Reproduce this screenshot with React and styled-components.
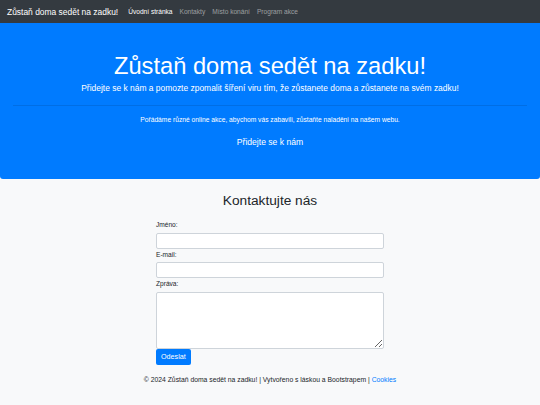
import styled, { createGlobalStyle } from "styled-components";

const GlobalStyle = createGlobalStyle`
  html, body {
    margin: 0;
    padding: 0;
    background: #f8f9fa;
    font-family: "Liberation Sans", Arial, sans-serif;
    color: #212529;
  }
`;

const Page = styled.div`
  width: 540px;
  min-height: 405px;
  background: #f8f9fa;
`;

const Navbar = styled.nav`
  display: flex;
  align-items: center;
  height: 23px;
  padding: 0 7px;
  background: #343a40;
`;

const Brand = styled.a`
  font-size: 8.45px;
  color: #ffffff;
  margin-right: 10px;
  white-space: nowrap;
`;

const NavLink = styled.a`
  font-size: 6.6px;
  margin-right: 7px;
  color: ${(props) => (props.active ? "#ffffff" : "rgba(255,255,255,0.5)")};
  white-space: nowrap;
`;

const Jumbotron = styled.header`
  background: #007bff;
  color: #ffffff;
  text-align: center;
  height: 156px;
  padding: 29px 13px 0;
  box-sizing: border-box;
  border-radius: 0 0 3px 3px;
`;

const Title = styled.h1`
  margin: 0;
  font-weight: 400;
  font-size: 23.7px;
  line-height: 28px;
`;

const Lead = styled.p`
  margin: 2px 0 0;
  font-size: 8.45px;
  line-height: 12px;
`;

const Rule = styled.hr`
  margin: 11px 0 0;
  border: 0;
  border-top: 1px solid rgba(0, 0, 0, 0.1);
`;

const Info = styled.p`
  margin: 9px 0 0;
  font-size: 6.7px;
  line-height: 10px;
`;

const JoinLink = styled.a`
  display: block;
  margin-top: 11px;
  font-size: 8.6px;
  line-height: 12px;
`;

const Section = styled.section`
  display: flex;
  flex-direction: column;
  align-items: center;
  padding-top: 12px;
`;

const SectionTitle = styled.h2`
  margin: 0;
  font-weight: 400;
  font-size: 13.7px;
  line-height: 20px;
`;

const Form = styled.form`
  width: 228px;
  margin-top: 8px;
  display: flex;
  flex-direction: column;
`;

const Label = styled.label`
  font-size: 6.6px;
  line-height: 11.5px;
  margin-bottom: 2px;
`;

const Input = styled.input`
  box-sizing: border-box;
  width: 100%;
  height: 16px;
  border: 1px solid #ced4da;
  border-radius: 2px;
  background: #ffffff;
  margin: 0;
`;

const TextArea = styled.textarea`
  box-sizing: border-box;
  width: 100%;
  height: 57px;
  border: 1px solid #ced4da;
  border-radius: 2px;
  background: #ffffff;
  margin: 0;
  resize: vertical;
  display: block;
`;

const SubmitButton = styled.button`
  align-self: flex-start;
  height: 16px;
  padding: 0 5px;
  border: 0;
  border-radius: 2px;
  background: #007bff;
  color: #ffffff;
  font-family: inherit;
  font-size: 7.2px;
`;

const Footer = styled.footer`
  text-align: center;
  font-size: 6.8px;
  line-height: 10px;
  margin-top: 10px;
`;

const FooterLink = styled.a`
  color: #007bff;
`;

export default function App() {
  return (
    <Page>
      <GlobalStyle />
      <Navbar>
        <Brand>Zůstaň doma sedět na zadku!</Brand>
        <NavLink active>Úvodní stránka</NavLink>
        <NavLink>Kontakty</NavLink>
        <NavLink>Místo konání</NavLink>
        <NavLink>Program akce</NavLink>
      </Navbar>
      <Jumbotron>
        <Title>Zůstaň doma sedět na zadku!</Title>
        <Lead>
          Přidejte se k nám a pomozte zpomalit šíření viru tím, že zůstanete
          doma a zůstanete na svém zadku!
        </Lead>
        <Rule />
        <Info>
          Pořádáme různé online akce, abychom vás zabavili, zůstaňte naladěni na
          našem webu.
        </Info>
        <JoinLink>Přidejte se k nám</JoinLink>
      </Jumbotron>
      <Section>
        <SectionTitle>Kontaktujte nás</SectionTitle>
        <Form onSubmit={(e) => e.preventDefault()}>
          <Label>Jméno:</Label>
          <Input type="text" />
          <Label>E-mail:</Label>
          <Input type="email" />
          <Label>Zpráva:</Label>
          <TextArea />
          <SubmitButton type="submit">Odeslat</SubmitButton>
        </Form>
      </Section>
      <Footer>
        © 2024 Zůstaň doma sedět na zadku! | Vytvořeno s láskou a Bootstrapem |{" "}
        <FooterLink>Cookies</FooterLink>
      </Footer>
    </Page>
  );
}
